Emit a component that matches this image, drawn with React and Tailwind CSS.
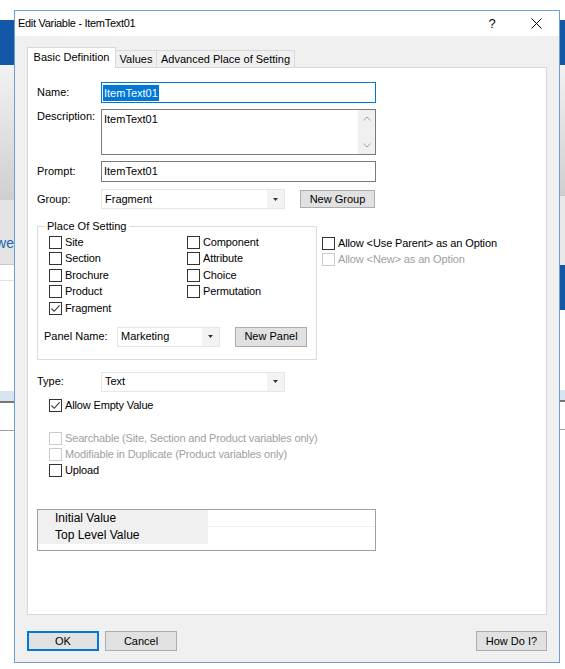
import React from "react";

function Box({ checked, disabled }) {
  return (
    <span
      className={
        disabled
          ? "w-[13px] h-[13px] border border-[#cccccc] bg-white flex items-center justify-center shrink-0"
          : "w-[13px] h-[13px] border border-[#333333] bg-white flex items-center justify-center shrink-0"
      }
    >
      {checked && (
        <svg width="11" height="11" viewBox="0 0 11 11">
          <path d="M1.5 5.5 L4.2 8.3 L9.6 2.4" stroke="#333333" strokeWidth="1.1" fill="none" />
        </svg>
      )}
    </span>
  );
}

function Check({ label, checked, disabled }) {
  return (
    <div className="flex items-center h-[16.5px]">
      <Box checked={checked} disabled={disabled} />
      <span className={disabled ? "ml-[3px] text-[#a0a0a0] tracking-[-0.12px]" : "ml-[3px] tracking-[-0.12px]"}>{label}</span>
    </div>
  );
}

function Select({ text, wide }) {
  return (
    <div
      className={
        wide
          ? "w-[184px] h-[20px] border border-[#e6e6e6] bg-white flex items-center"
          : "w-[103px] h-[20px] border border-[#e6e6e6] bg-white flex items-center"
      }
    >
      <span className="flex-1 pl-[3px]">{text}</span>
      <span className="w-[17px] h-full bg-[#f3f3f3] flex items-center justify-center">
        <svg width="5" height="3" viewBox="0 0 5 3">
          <path d="M0 0 H5 L2.5 3 Z" fill="#333333" />
        </svg>
      </span>
    </div>
  );
}

function Btn({ children, cls }) {
  return (
    <div className={"bg-[#e1e1e1] border border-[#adadad] flex items-center justify-center " + cls}>{children}</div>
  );
}

function Chevron({ up }) {
  return (
    <svg width="8" height="5" viewBox="0 0 8 5">
      <path d={up ? "M0.5 4.5 L4 1 L7.5 4.5" : "M0.5 0.5 L4 4 L7.5 0.5"} stroke="#a6a6a6" strokeWidth="1" fill="none" />
    </svg>
  );
}

export default function App() {
  return (
    <div className="relative w-[565px] h-[669px] bg-white overflow-hidden font-['Liberation_Sans',Arial,sans-serif] text-[11px] leading-[13px] text-black">
      {/* background application */}
      <div className="flex justify-between h-full">
        <div className="w-[14px] flex flex-col">
          <div className="h-[20px] bg-white" />
          <div className="h-[45px] bg-[#1258a6]" />
          <div className="h-[135px] bg-gradient-to-b from-[#f2f2f2] to-[#cfcfcf]" />
          <div className="h-[65px] bg-[#e4e4e4] border-b border-[#c8c8c8] flex items-end justify-end pb-[14px] overflow-hidden">
            <span className="text-[14px] leading-[14px] text-[#1d63b3] whitespace-nowrap">we</span>
          </div>
          <div className="h-[16px] border-b border-[#e2e2e2]" />
          <div className="h-[110px]" />
          <div className="h-[12px] bg-[#d6e4f2] border-b-2 border-[#777777]" />
          <div className="h-[28px] border-b border-[#a0a0a0]" />
        </div>
        <div className="w-[5px] flex flex-col">
          <div className="h-[20px] bg-white" />
          <div className="h-[45px] bg-[#1258a6]" />
          <div className="h-[130px] bg-gradient-to-b from-[#f2f2f2] to-[#cfcfcf]" />
          <div className="h-[70px] bg-[#e9e9e9] border-t border-[#c8c8c8]" />
          <div className="h-[45px] bg-[#1258a6]" />
          <div className="h-[80px] bg-white" />
          <div className="h-[12px] bg-[#d6e4f2] border-b-2 border-[#777777]" />
          <div className="h-[28px] border-b border-[#a0a0a0]" />
        </div>
      </div>

      {/* dialog window */}
      <div className="absolute left-[14px] top-[10px] w-[546px] h-[653px] border border-[#6d9fd6] bg-[#f0f0f0] flex flex-col">
        <div className="h-[25px] bg-white flex items-center pl-[3px] shrink-0">
          <span className="flex-1 text-[11px] tracking-[-0.3px]">Edit Variable - ItemText01</span>
          <span className="text-[13px] w-[20px] text-center mr-[29px]">?</span>
          <svg width="11" height="11" viewBox="0 0 11 11" className="mr-[17px]">
            <path d="M0.5 0.5 L10.5 10.5 M10.5 0.5 L0.5 10.5" stroke="#000000" strokeWidth="1" />
          </svg>
        </div>

        <div className="flex-1 flex flex-col px-[12px] pt-[11px] pb-[11px]">
          {/* tabs */}
          <div className="flex items-end h-[20px] shrink-0">
            <div className="relative z-10 w-[89px] h-[21px] -mb-px bg-white border border-b-0 border-[#d9d9d9] flex items-center justify-center pb-[2px]">
              Basic Definition
            </div>
            <div className="w-[41px] h-[17px] border-t border-r border-[#d9d9d9] flex items-center justify-center">Values</div>
            <div className="w-[138px] h-[17px] border-t border-r border-[#d9d9d9] flex items-center justify-center">
              Advanced Place of Setting
            </div>
          </div>

          {/* panel */}
          <div className="flex-1 bg-white border border-[#d9d9d9] flex flex-col pl-[9px] pt-[14px]">
            <div className="flex items-center h-[21px]">
              <span className="w-[64px]">Name:</span>
              <div className="w-[275px] h-[21px] border border-[#0078d7] flex items-center pl-[1px]">
                <span className="bg-[#0078d7] text-white px-[1px] leading-[16px]">ItemText01</span>
              </div>
            </div>

            <div className="flex mt-[6px]">
              <span className="w-[64px] pt-[1px]">Description:</span>
              <div className="w-[275px] h-[46px] border border-[#7a7a7a] flex">
                <span className="flex-1 pl-[2px] pt-[3px]">ItemText01</span>
                <div className="w-[17px] bg-[#f0f0f0] flex flex-col justify-between items-center py-[6px]">
                  <Chevron up />
                  <Chevron />
                </div>
              </div>
            </div>

            <div className="flex items-center mt-[6px]">
              <span className="w-[64px]">Prompt:</span>
              <div className="w-[275px] h-[21px] border border-[#7a7a7a] flex items-center pl-[2px]">ItemText01</div>
            </div>

            <div className="flex items-center mt-[7px]">
              <span className="w-[64px]">Group:</span>
              <Select text="Fragment" wide />
              <Btn cls="ml-[15px] w-[75px] h-[18px]">New Group</Btn>
            </div>

            <div className="flex items-start mt-[11px]">
              <fieldset className="w-[280px] border border-[#dcdcdc] pb-[12px]">
                <legend className="ml-[7px] px-[2px]">Place Of Setting</legend>
                <div className="flex pl-[11px] mt-[1px]">
                  <div className="w-[138px] flex flex-col">
                    <Check label="Site" />
                    <Check label="Section" />
                    <Check label="Brochure" />
                    <Check label="Product" />
                    <Check label="Fragment" checked />
                  </div>
                  <div className="flex flex-col">
                    <Check label="Component" />
                    <Check label="Attribute" />
                    <Check label="Choice" />
                    <Check label="Permutation" />
                  </div>
                </div>
                <div className="flex items-center mt-[10px] pl-[6px]">
                  <span className="w-[73px]">Panel Name:</span>
                  <Select text="Marketing" />
                  <Btn cls="ml-[15px] w-[72px] h-[20px]">New Panel</Btn>
                </div>
              </fieldset>
              <div className="ml-[5px] flex flex-col pt-[15px]">
                <Check label="Allow <Use Parent> as an Option" />
                <Check label="Allow <New> as an Option" disabled />
              </div>
            </div>

            <div className="flex items-center mt-[12px]">
              <span className="w-[64px]">Type:</span>
              <Select text="Text" wide />
            </div>

            <div className="pl-[12px] mt-[6px] flex flex-col tracking-[-0.15px]">
              <div className="h-[16px] flex items-center">
                <Box checked />
                <span className="ml-[3px]">Allow Empty Value</span>
              </div>
              <div className="h-[16px] flex items-center mt-[17px]">
                <Box disabled />
                <span className="ml-[3px] text-[#a0a0a0]">Searchable (Site, Section and Product variables only)</span>
              </div>
              <div className="h-[16px] flex items-center">
                <Box disabled />
                <span className="ml-[3px] text-[#a0a0a0]">Modifiable in Duplicate (Product variables only)</span>
              </div>
              <div className="h-[16px] flex items-center">
                <Box />
                <span className="ml-[3px]">Upload</span>
              </div>
            </div>

            <div className="mt-[30px] w-[339px] h-[42px] border border-[#a0a0a0] flex flex-col text-[12px]">
              <div className="flex h-[17px]">
                <span className="w-[170px] bg-[#f0f0f0] pl-[17px] flex items-center">Initial Value</span>
                <span className="flex-1 border-b border-[#f0f0f0]" />
              </div>
              <div className="flex h-[17px]">
                <span className="w-[170px] bg-[#f0f0f0] pl-[17px] flex items-center">Top Level Value</span>
                <span className="flex-1" />
              </div>
            </div>
          </div>

          {/* buttons */}
          <div className="flex items-center mt-[16px] h-[20px] shrink-0">
            <div className="w-[72px] h-[20px] bg-[#e1e1e1] border-2 border-[#0078d7] flex items-center justify-center">OK</div>
            <Btn cls="ml-[6px] w-[72px] h-[20px]">Cancel</Btn>
            <div className="flex-1" />
            <Btn cls="w-[71px] h-[20px]">How Do I?</Btn>
          </div>
        </div>
      </div>
    </div>
  );
}
